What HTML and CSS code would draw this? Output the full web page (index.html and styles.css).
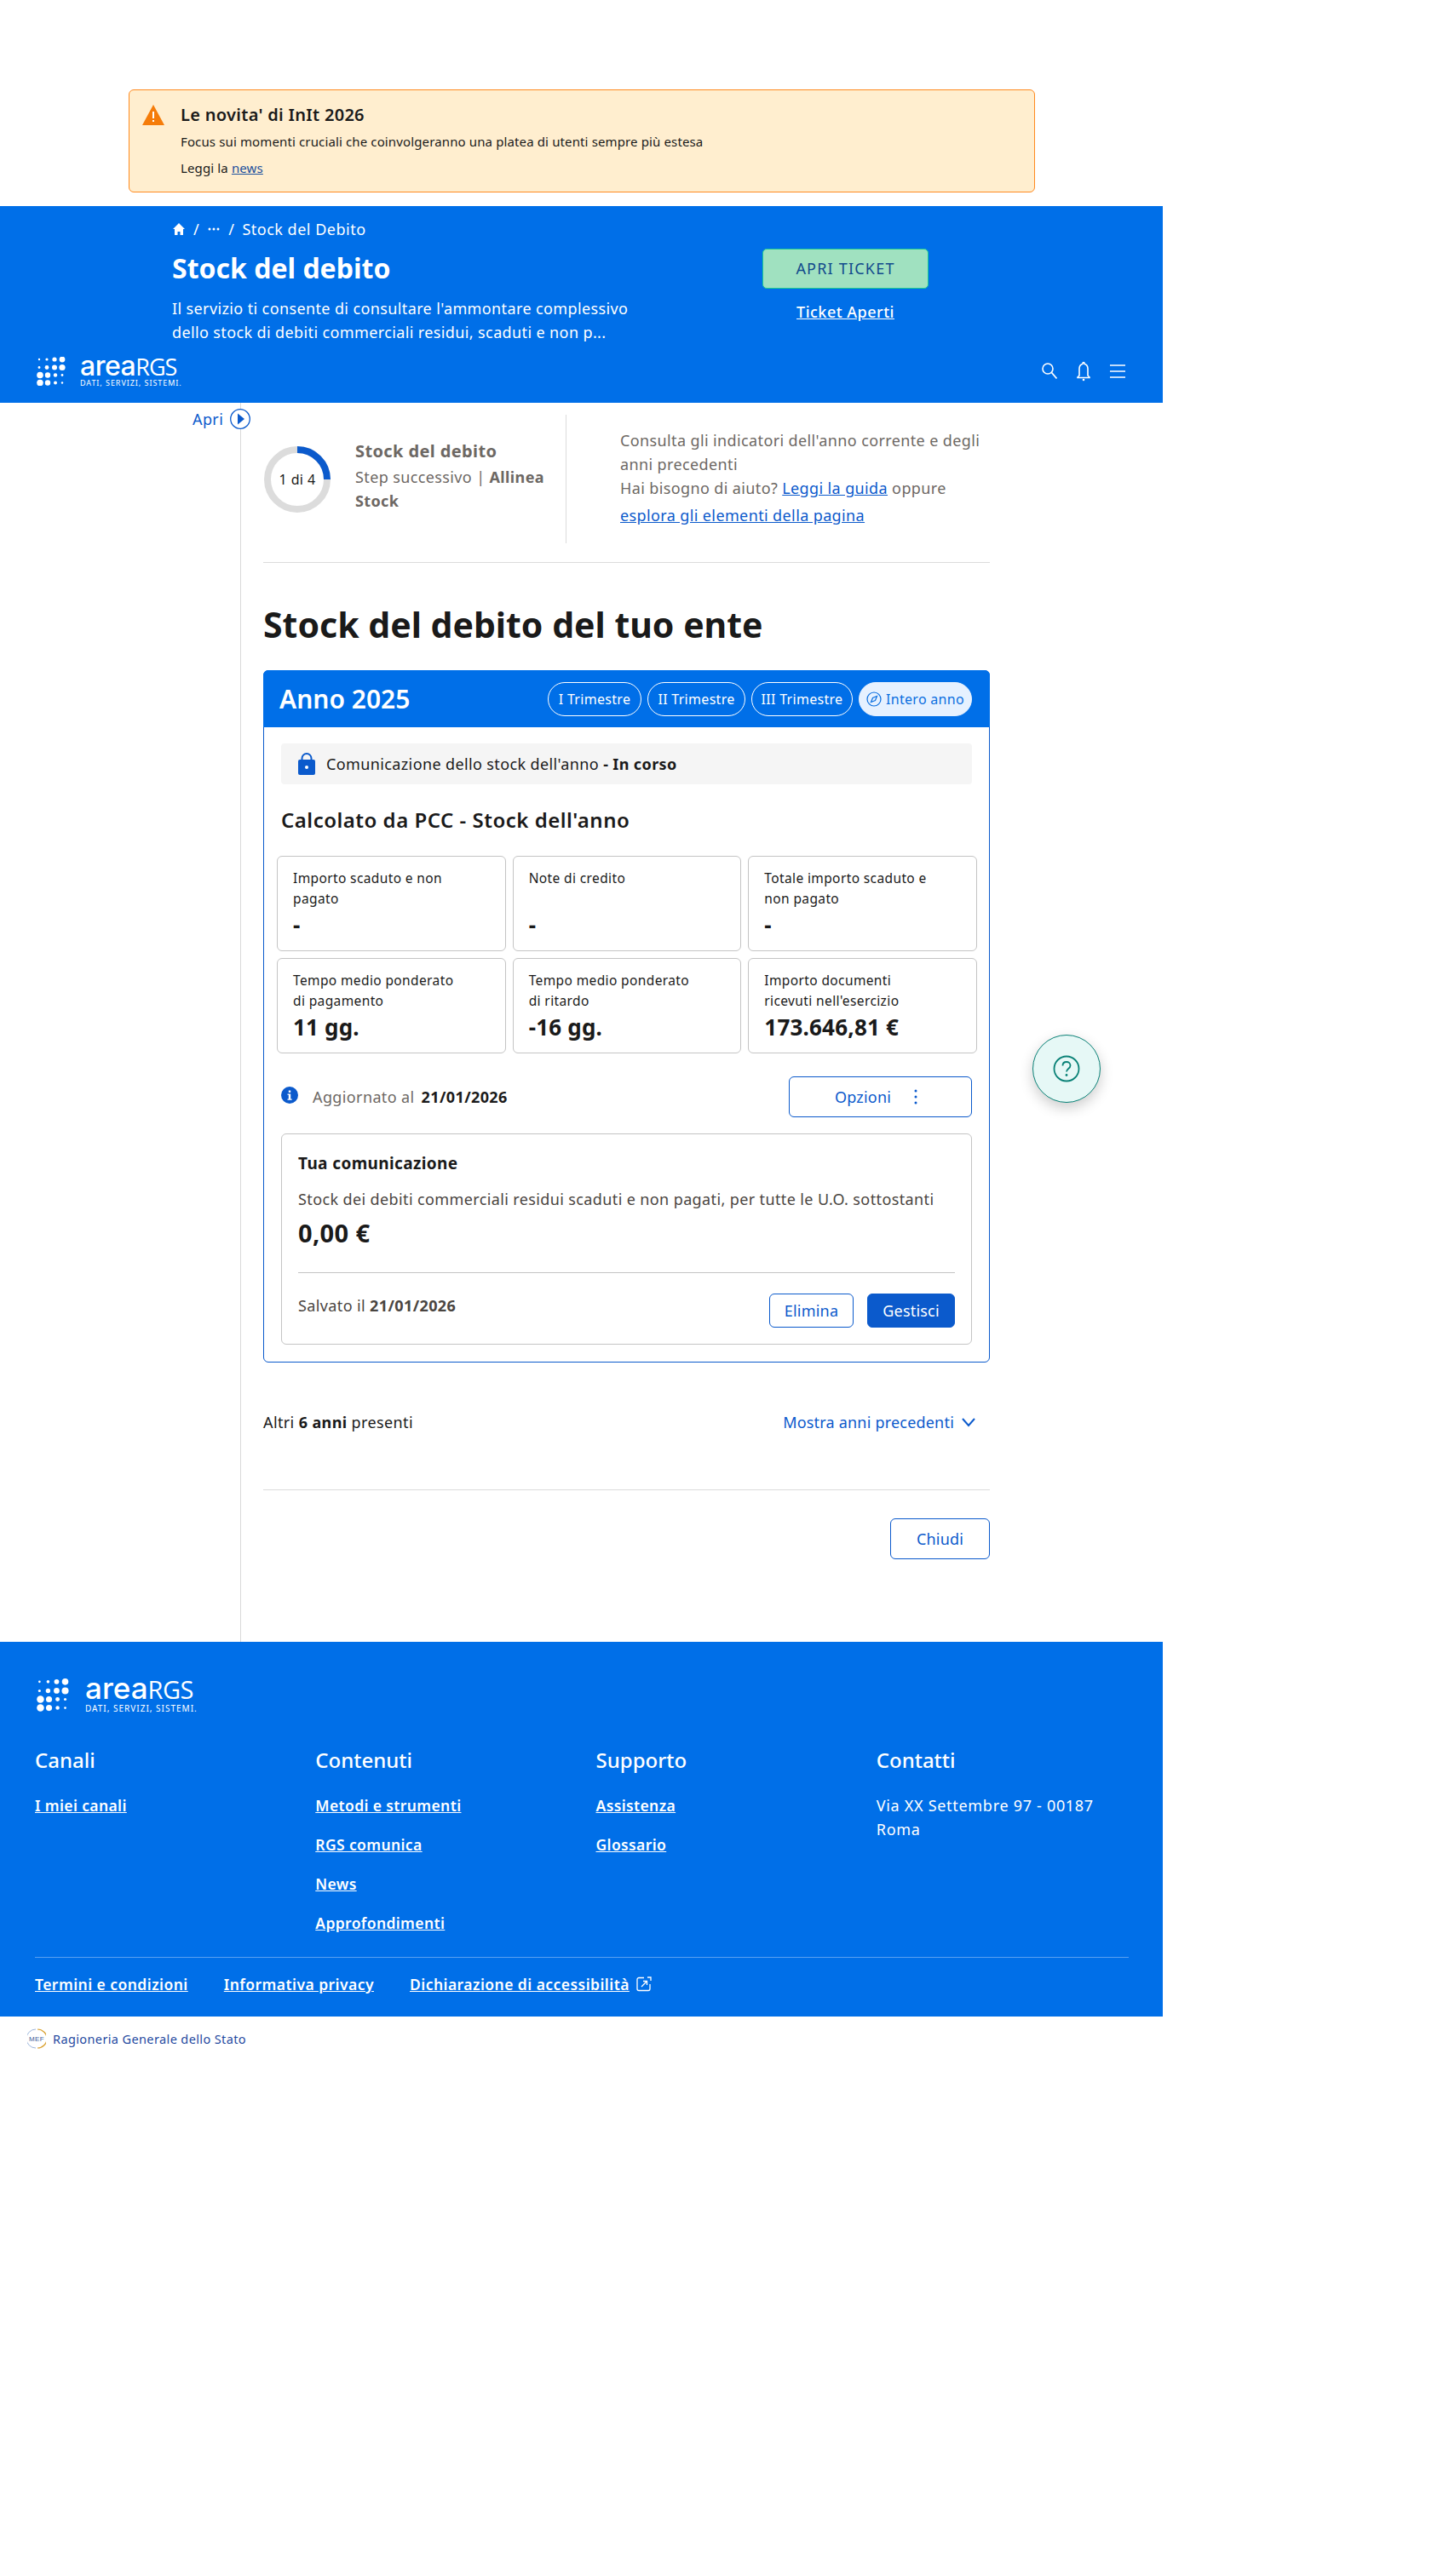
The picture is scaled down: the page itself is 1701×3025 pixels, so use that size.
FILE: index.html
```html
<!DOCTYPE html>
<html lang="it">
<head>
    <meta charset="UTF-8">
    <meta name="viewport" content="width=device-width, initial-scale=1.0">
    <title>Stock del debito</title>
    <link rel="stylesheet" href="styles.css">
</head>
<body>
    <svg class="defs" width="0" height="0">
        <symbol id="dots" viewBox="0 0 34 34">
            <circle cx="3" cy="3" r="1.2"/><circle cx="12" cy="3" r="1.6"/><circle cx="21" cy="3" r="2.6"/><circle cx="30" cy="3" r="3.4"/>
            <circle cx="3" cy="12.5" r="1.4"/><circle cx="12" cy="12.5" r="2.4"/><circle cx="21" cy="12.5" r="3"/><circle cx="30" cy="12.5" r="3.6"/>
            <circle cx="4" cy="21.5" r="3.8"/><circle cx="13" cy="21.5" r="3.2"/><circle cx="22" cy="21.5" r="2.2"/><circle cx="30" cy="21.5" r="1.4"/>
            <circle cx="4" cy="30.5" r="3.8"/><circle cx="13" cy="30.5" r="3.2"/><circle cx="22" cy="30.5" r="2"/><circle cx="30" cy="30.5" r="1.2"/>
        </symbol>
    </svg>

    <div class="page">
        <div class="alert">
            <svg class="alert-icon" viewBox="0 0 26 24"><path d="M13 0 26 24H0z" fill="#f57c0a"/><rect x="12" y="8" width="2" height="8" fill="#fff"/><rect x="12" y="18" width="2" height="2" fill="#fff"/></svg>
            <div class="alert-title">Le novita' di InIt 2026</div>
            <div class="alert-text">Focus sui momenti cruciali che coinvolgeranno una platea di utenti sempre più estesa</div>
            <div class="alert-text alert-last">Leggi la <a href="#">news</a></div>
        </div>

        <header class="hero">
            <div class="hero-top">
                <div class="hero-left">
                    <div class="crumbs">
                        <svg class="crumb-home" viewBox="0 0 16 16"><path d="M8 1 1 8h2v7h3.500v-4h3v4H13V8h2z" fill="#fff"/></svg>
                        <span>/</span>
                        <svg class="crumb-more" viewBox="0 0 16 4"><circle cx="3" cy="2" r="1.500" fill="#fff"/><circle cx="8" cy="2" r="1.500" fill="#fff"/><circle cx="13" cy="2" r="1.500" fill="#fff"/></svg>
                        <span>/</span>
                        <span>Stock del Debito</span>
                    </div>
                    <h1 class="hero-title">Stock del debito</h1>
                    <p class="hero-desc">Il servizio ti consente di consultare l'ammontare complessivo<br>dello stock di debiti commerciali residui, scaduti e non p...</p>
                </div>
                <div class="hero-actions">
                    <a class="btn-ticket" href="#">APRI TICKET</a>
                    <a class="ticket-link" href="#">Ticket Aperti</a>
                </div>
            </div>
            <div class="navbar">
                <div class="logo">
                    <svg class="logo-dots"><use href="#dots"/></svg>
                    <div>
                        <div class="logo-name">area<span>RGS</span></div>
                        <div class="logo-sub">DATI, SERVIZI, SISTEMI.</div>
                    </div>
                </div>
                <div class="nav-icons">
                    <svg viewBox="0 0 20 24"><circle cx="8" cy="9" r="6" fill="none" stroke="#fff" stroke-width="1.600"/><path d="m12.500 13.500 6 7" stroke="#fff" stroke-width="1.800" fill="none"/></svg>
                    <svg viewBox="0 0 20 24"><path d="M10 1.500c-.6 0-1 .4-1 1v.7C6.500 4 5 6.300 5 9v8l-2 2v.5h14V19l-2-2V9c0-2.700-1.500-5-4-5.800v-.7c0-.6-.4-1-1-1z" fill="none" stroke="#fff" stroke-width="1.600"/><circle cx="10" cy="22" r="1.300" fill="#fff"/></svg>
                    <svg viewBox="0 0 20 24"><path d="M1 5h18M1 12h18M1 19h18" stroke="#fff" stroke-width="1.600" fill="none"/></svg>
                </div>
            </div>
        </header>

        <main class="main">
            <a class="side-toggle" href="#">Apri <svg viewBox="0 0 24 24"><circle cx="12" cy="12" r="11.300" fill="#fff" stroke="#0b5acc" stroke-width="1.300"/><path d="M9 5.500v13l8-6.500z" fill="#0b5acc"/></svg></a>

            <section class="intro">
                <div class="intro-step">
                    <div class="donut">
                        <svg viewBox="0 0 78 78"><circle cx="39" cy="39" r="35" fill="none" stroke="#dcdcdc" stroke-width="8"/><path d="M39 4a35 35 0 0 1 35 35" fill="none" stroke="#0b5acc" stroke-width="8"/></svg>
                        <span>1 di 4</span>
                    </div>
                    <div class="step-text">
                        <div class="step-title">Stock del debito</div>
                        <div>Step successivo | <b>Allinea<br>Stock</b></div>
                    </div>
                </div>
                <div class="intro-help">
                    Consulta gli indicatori dell'anno corrente e degli<br>anni precedenti<br>
                    Hai bisogno di aiuto? <a href="#">Leggi la guida</a> oppure
                    <div class="help-last"><a href="#">esplora gli elementi della pagina</a></div>
                </div>
            </section>

            <h2 class="page-title">Stock del debito del tuo ente</h2>

            <section class="card">
                <div class="card-head">
                    <div class="card-year">Anno 2025</div>
                    <div class="pills">
                        <a class="pill pill-1" href="#">I Trimestre</a>
                        <a class="pill pill-2" href="#">II Trimestre</a>
                        <a class="pill pill-3" href="#">III Trimestre</a>
                        <a class="pill pill-active" href="#"><svg viewBox="0 0 18 18"><circle cx="9" cy="9" r="8" fill="none" stroke="#0b6fe0" stroke-width="1.200"/><path d="m12.500 5.500-2 5-5 2 2-5z" fill="none" stroke="#0b6fe0" stroke-width="1.200"/></svg>Intero anno</a>
                    </div>
                </div>
                <div class="card-body">
                    <div class="status">
                        <svg viewBox="0 0 20 26"><path d="M4.500 9V6.500a5.500 5.500 0 0 1 11 0V8" fill="none" stroke="#0b5acc" stroke-width="2"/><rect x="0" y="8" width="20" height="18" rx="2" fill="#0b5acc"/><circle cx="10" cy="17" r="2" fill="#fff"/></svg>
                        <span>Comunicazione dello stock dell'anno <b>- In corso</b></span>
                    </div>
                    <h3 class="calc-title">Calcolato da PCC - Stock dell'anno</h3>
                    <div class="tiles">
                        <div class="tile"><div class="tile-label">Importo scaduto e non<br>pagato</div><div class="tile-value">-</div></div>
                        <div class="tile"><div class="tile-label">Note di credito<br>&nbsp;</div><div class="tile-value">-</div></div>
                        <div class="tile"><div class="tile-label">Totale importo scaduto e<br>non pagato</div><div class="tile-value">-</div></div>
                        <div class="tile"><div class="tile-label">Tempo medio ponderato<br>di pagamento</div><div class="tile-value">11 gg.</div></div>
                        <div class="tile"><div class="tile-label">Tempo medio ponderato<br>di ritardo</div><div class="tile-value">-16 gg.</div></div>
                        <div class="tile"><div class="tile-label">Importo documenti<br>ricevuti nell'esercizio</div><div class="tile-value">173.646,81 €</div></div>
                    </div>
                    <div class="update">
                        <div class="update-left">
                            <svg viewBox="0 0 20 20"><circle cx="10" cy="10" r="10" fill="#0b5acc"/><rect x="8.800" y="4.500" width="2.400" height="2.400" fill="#fff"/><path d="M7.500 8.500h3.700v6h1.500v1.200H7.500v-1.200h1.300V9.700H7.500z" fill="#fff"/></svg>
                            <span>Aggiornato al</span> <b>21/01/2026</b>
                        </div>
                        <a class="btn btn-options" href="#">Opzioni <svg viewBox="0 0 4 18"><circle cx="2" cy="2" r="1.500"/><circle cx="2" cy="9" r="1.500"/><circle cx="2" cy="16" r="1.500"/></svg></a>
                    </div>
                    <div class="inner">
                        <div class="inner-title">Tua comunicazione</div>
                        <div class="inner-desc">Stock dei debiti commerciali residui scaduti e non pagati, per tutte le U.O. sottostanti</div>
                        <div class="inner-value">0,00 €</div>
                        <div class="inner-foot">
                            <div class="saved">Salvato il <b>21/01/2026</b></div>
                            <div class="inner-btns">
                                <a class="btn btn-small" href="#">Elimina</a>
                                <a class="btn btn-small btn-solid" href="#">Gestisci</a>
                            </div>
                        </div>
                    </div>
                </div>
            </section>

            <div class="more">
                <div>Altri <b>6 anni</b> presenti</div>
                <a class="more-link" href="#">Mostra anni precedenti <svg viewBox="0 0 18 12"><path d="m2 2 7 8 7-8" fill="none" stroke="#0b5acc" stroke-width="2"/></svg></a>
            </div>
            <div class="close-row">
                <a class="btn btn-close" href="#">Chiudi</a>
            </div>
        </main>

        <footer class="footer">
            <div class="logo logo-big">
                <svg class="logo-dots"><use href="#dots"/></svg>
                <div>
                    <div class="logo-name">area<span>RGS</span></div>
                    <div class="logo-sub">DATI, SERVIZI, SISTEMI.</div>
                </div>
            </div>
            <div class="foot-cols">
                <div class="foot-col">
                    <h4>Canali</h4>
                    <a href="#">I miei canali</a>
                </div>
                <div class="foot-col">
                    <h4>Contenuti</h4>
                    <a href="#">Metodi e strumenti</a>
                    <a href="#">RGS comunica</a>
                    <a href="#">News</a>
                    <a href="#">Approfondimenti</a>
                </div>
                <div class="foot-col">
                    <h4>Supporto</h4>
                    <a href="#">Assistenza</a>
                    <a href="#">Glossario</a>
                </div>
                <div class="foot-col">
                    <h4>Contatti</h4>
                    <p>Via XX Settembre 97 - 00187<br>Roma</p>
                </div>
            </div>
            <div class="foot-bottom">
                <a href="#">Termini e condizioni</a>
                <a href="#">Informativa privacy</a>
                <a href="#">Dichiarazione di accessibilità</a>
                <svg viewBox="0 0 18 18"><path d="M9 1.500H3a2 2 0 0 0-2 2v11a2 2 0 0 0 2 2h11a2 2 0 0 0 2-2V9" fill="none" stroke="#fff" stroke-width="1.300"/><path d="M6 12l6-6M8 5.500h4.500V10M13 1h4v4" fill="none" stroke="#fff" stroke-width="1.300"/></svg>
            </div>
        </footer>

        <div class="mef">
            <svg viewBox="0 0 22 24"><path d="M12 1a11 11 0 0 1 0 22" fill="none" stroke="#d9a02e" stroke-width="1.200"/><path d="M10 1a11 11 0 0 0 0 22" fill="none" stroke="#9db6dc" stroke-width="1"/><text x="11" y="15" text-anchor="middle">MEF</text></svg>
            <span>Ragioneria Generale dello Stato</span>
        </div>

        <a class="fab" href="#"><svg viewBox="0 0 32 32"><circle cx="16" cy="16" r="14.500" fill="none" stroke="#0a8277" stroke-width="1.800"/><path d="M11.500 12.500c0-2.800 2-4.500 4.500-4.500s4.500 1.700 4.500 4.200c0 3.800-4.500 3.800-4.500 7.300" fill="none" stroke="#0a8277" stroke-width="1.800"/><circle cx="16" cy="23.500" r="1.400" fill="#0a8277"/></svg></a>
    </div>
</body>
</html>
```

FILE: styles.css
```css
body {
    margin: 0;
    background-color: #ffffff;
    color: #1a1a1a;
    font-family: "Noto Sans", "Open Sans", sans-serif;
    font-size: 18px;
    line-height: 28px;
    letter-spacing: 0.38px;
}
a {
    color: #0b5acc;
}
b {
    font-weight: 700;
}
.defs {
    position: absolute;
}
.page {
    position: relative;
    width: 1365px;
    padding-top: 105px;
    padding-bottom: 620px;
}

/* avviso */
.alert {
    position: relative;
    box-sizing: border-box;
    width: 1064px;
    height: 121px;
    margin: 0 0 16px 151px;
    padding: 13px 0 0 60px;
    background-color: #ffeecf;
    border: 1px solid #ff8a1f;
    border-radius: 6px;
}
.alert-icon {
    position: absolute;
    left: 15px;
    top: 17px;
    width: 26px;
    height: 24px;
}
.alert-title {
    font-size: 20px;
    font-weight: 600;
    line-height: 32px;
    letter-spacing: 0.3px;
}
.alert-text {
    margin-top: 3px;
    font-size: 15px;
    line-height: 24px;
    letter-spacing: 0.13px;
}
.alert-last {
    margin-top: 7px;
}
.alert-last a {
    color: #1b4f9c;
}

/* testata */
.hero {
    height: 231px;
    background-color: #006fe8;
    color: #ffffff;
}
.hero-top {
    display: flex;
    height: 162px;
    padding-left: 202px;
}
.hero-left {
    width: 693px;
    padding-top: 15px;
}
.crumbs {
    display: flex;
    align-items: center;
    gap: 9px;
    height: 24px;
    letter-spacing: 0.5px;
}
.crumb-home {
    width: 16px;
    height: 16px;
}
.crumb-more {
    width: 16px;
    height: 4px;
}
.hero-title {
    margin: 12px 0 11px;
    font-size: 32px;
    font-weight: 700;
    line-height: 44px;
    letter-spacing: 0;
}
.hero-desc {
    margin: 0;
}
.hero-actions {
    display: flex;
    flex-direction: column;
    align-items: center;
    width: 195px;
    padding-top: 50px;
}
.btn-ticket {
    box-sizing: border-box;
    display: block;
    width: 195px;
    height: 47px;
    background-color: #a0e1c0;
    border: 1px solid #1ccb93;
    border-radius: 5px;
    color: #124a8c;
    line-height: 45px;
    text-align: center;
    text-decoration: none;
    letter-spacing: 1.2px;
}
.ticket-link {
    margin-top: 13px;
    color: #ffffff;
    font-weight: 500;
    letter-spacing: 0.5px;
}
.navbar {
    display: flex;
    justify-content: space-between;
    align-items: center;
    height: 64px;
    padding: 0 43px 5px;
}
.logo {
    display: flex;
    align-items: center;
    gap: 17px;
    color: #ffffff;
}
.logo-dots {
    width: 34px;
    height: 34px;
    fill: #ffffff;
}
.logo-name {
    height: 24px;
    font-family: Inter, "Noto Sans", sans-serif;
    font-size: 32px;
    font-weight: 500;
    line-height: 24px;
    letter-spacing: -0.5px;
}
.logo-name span {
    font-family: "Open Sans", sans-serif;
    font-size: 27px;
    letter-spacing: -1px;
}
.logo-sub {
    margin-top: 3px;
    font-size: 9px;
    line-height: 10px;
    letter-spacing: 0.95px;
}
.nav-icons {
    display: flex;
    gap: 20px;
}
.nav-icons svg {
    width: 20px;
    height: 24px;
}

/* contenuto */
.main {
    position: relative;
    box-sizing: border-box;
    width: 880px;
    height: 1455px;
    margin-left: 282px;
    padding: 14px 0 0 26px;
    border-left: 1px solid #d9d9d9;
}
.side-toggle {
    position: absolute;
    left: -57px;
    top: 5px;
    display: flex;
    align-items: center;
    gap: 8px;
    text-decoration: none;
}
.side-toggle svg {
    width: 24px;
    height: 24px;
}
.intro {
    display: flex;
    height: 174px;
    border-bottom: 1px solid #dcdcdc;
    color: #6d6864;
    box-sizing: border-box;
    padding-bottom: 22px;
}
.intro-step {
    display: flex;
    align-items: center;
    gap: 29px;
    box-sizing: border-box;
    width: 356px;
    border-right: 1px solid #dcdcdc;
}
.donut {
    position: relative;
    flex: none;
    width: 78px;
    height: 78px;
    margin-left: 1px;
}
.donut svg {
    display: block;
}
.donut span {
    position: absolute;
    inset: 0;
    color: #1a1a1a;
    font-size: 16px;
    line-height: 78px;
    text-align: center;
}
.step-text {
    width: 232px;
    margin-top: -8px;
}
.step-title {
    margin-bottom: 2px;
    font-size: 20px;
    font-weight: 700;
}
.intro-help {
    padding: 16px 0 0 63px;
}
.help-last {
    margin-top: 4px;
}
.page-title {
    margin: 44px 0 26px;
    font-size: 41px;
    font-weight: 700;
    line-height: 56px;
    letter-spacing: 0;
}

/* scheda anno */
.card {
    box-sizing: border-box;
    width: 853px;
    height: 813px;
    border: 1px solid #0b5acc;
    border-radius: 6px;
}
.card-head {
    display: flex;
    justify-content: space-between;
    align-items: center;
    height: 67px;
    margin: -1px -1px 0;
    padding: 0 21px 0 19px;
    background-color: #006fe8;
    border-radius: 6px 6px 0 0;
    color: #ffffff;
}
.card-year {
    font-size: 30px;
    font-weight: 600;
    letter-spacing: 0;
}
.pills {
    display: flex;
    gap: 7px;
}
.pill {
    box-sizing: border-box;
    display: flex;
    justify-content: center;
    align-items: center;
    gap: 5px;
    height: 40px;
    border: 1px solid #ffffff;
    border-radius: 20px;
    color: #ffffff;
    font-size: 16px;
    letter-spacing: 0.3px;
    text-decoration: none;
}
.pill-1 {
    width: 110px;
}
.pill-2 {
    width: 115px;
}
.pill-3 {
    width: 119px;
}
.pill-active {
    width: 133px;
    background-color: #e6f1ff;
    color: #0b6fe0;
    border-color: #e6f1ff;
}
.pill svg {
    width: 18px;
    height: 18px;
}
.card-body {
    padding: 19px 20px 0;
}
.status {
    display: flex;
    align-items: center;
    gap: 13px;
    height: 48px;
    padding-left: 20px;
    background-color: #f5f5f5;
    border-radius: 4px;
}
.status svg {
    width: 20px;
    height: 26px;
}
.calc-title {
    margin: 26px 0;
    font-size: 24px;
    font-weight: 600;
    line-height: 32px;
    letter-spacing: 0.5px;
}
.tiles {
    display: grid;
    grid-template-columns: repeat(3, 1fr);
    grid-auto-rows: 112px;
    gap: 8px;
    width: 822px;
    margin-left: -5px;
}
.tile {
    box-sizing: border-box;
    padding: 13px 18px 0;
    border: 1px solid #c4c4c4;
    border-radius: 6px;
}
.tile-label {
    font-size: 15.5px;
    line-height: 24px;
}
.tile-value {
    margin-top: 3px;
    font-size: 26px;
    font-weight: 700;
    line-height: 32px;
    letter-spacing: 0.2px;
}
.update {
    display: flex;
    justify-content: space-between;
    align-items: center;
    margin-top: 27px;
}
.update-left {
    display: flex;
    align-items: center;
    gap: 8px;
}
.update-left svg {
    width: 20px;
    height: 20px;
    margin-right: 9px;
    margin-top: -4px;
}
.update-left span {
    color: #6d6864;
}
.btn {
    box-sizing: border-box;
    display: flex;
    justify-content: center;
    align-items: center;
    border: 1px solid #0b5acc;
    border-radius: 6px;
    color: #0b5acc;
    text-decoration: none;
    letter-spacing: 0.2px;
}
.btn-options {
    gap: 27px;
    width: 215px;
    height: 48px;
    padding-right: 10px;
}
.btn-options svg {
    width: 4px;
    height: 18px;
    fill: #0b5acc;
}
.inner {
    box-sizing: border-box;
    height: 248px;
    margin-top: 19px;
    padding: 20px 19px 0;
    border: 1px solid #c4c4c4;
    border-radius: 6px;
}
.inner-title {
    font-size: 19px;
    font-weight: 700;
}
.inner-desc {
    margin-top: 14px;
    color: #4a4541;
    white-space: nowrap;
}
.inner-value {
    margin-top: 6px;
    font-size: 29px;
    font-weight: 700;
    line-height: 40px;
}
.inner-foot {
    display: flex;
    justify-content: space-between;
    margin-top: 26px;
    padding-top: 24px;
    border-top: 1px solid #c4c4c4;
}
.saved {
    color: #4a4541;
}
.inner-btns {
    display: flex;
    gap: 16px;
}
.btn-small {
    width: 99px;
    height: 40px;
}
.btn-solid {
    width: 103px;
    background-color: #0b5acc;
    color: #ffffff;
}
.more {
    display: flex;
    justify-content: space-between;
    margin-top: 56px;
    padding-bottom: 65px;
    border-bottom: 1px solid #dcdcdc;
    width: 853px;
}
.more-link {
    display: flex;
    align-items: center;
    gap: 8px;
    margin-right: 16px;
    text-decoration: none;
    letter-spacing: 0.2px;
}
.more-link svg {
    width: 18px;
    height: 12px;
}
.close-row {
    display: flex;
    justify-content: flex-end;
    width: 853px;
    margin-top: 33px;
}
.btn-close {
    width: 117px;
    height: 48px;
}

/* piede */
.footer {
    padding: 41px 40px 24px 41px;
    background-color: #006fe8;
    color: #ffffff;
}
.logo-big {
    margin-left: 2px;
    gap: 19px;
}
.logo-big .logo-dots {
    width: 38px;
    height: 39px;
}
.logo-big .logo-name {
    height: 26px;
    font-size: 35px;
    line-height: 26px;
    letter-spacing: 0;
}
.logo-big .logo-name span {
    font-size: 29px;
    letter-spacing: -0.5px;
}
.logo-big .logo-sub {
    margin-top: 6px;
    font-size: 10px;
    line-height: 11px;
    letter-spacing: 1px;
}
.foot-cols {
    display: grid;
    grid-template-columns: repeat(4, 1fr);
    gap: 33px;
    margin-top: 39px;
}
.foot-col {
    display: flex;
    flex-direction: column;
    align-items: flex-start;
    gap: 18px;
}
.foot-col h4 {
    margin: 0 0 5px;
    font-size: 24px;
    font-weight: 500;
    line-height: 32px;
    letter-spacing: 0;
}
.foot-col a,
.foot-bottom a {
    color: #ffffff;
    font-size: 17.5px;
    font-weight: 600;
}
.foot-bottom a {
    letter-spacing: 0.45px;
}
.foot-col p {
    margin: 0;
    letter-spacing: 0.7px;
}
.foot-bottom {
    display: flex;
    align-items: center;
    gap: 42px;
    margin-top: 26px;
    padding-top: 17px;
    border-top: 1px solid rgba(255, 255, 255, 0.35);
}
.foot-bottom svg {
    width: 18px;
    height: 18px;
    margin-left: -34px;
}

.mef {
    display: flex;
    align-items: center;
    gap: 8px;
    padding: 12px 32px 0;
    color: #1f4a9f;
    font-size: 14.5px;
}
.mef svg {
    width: 22px;
    height: 24px;
}
.mef text {
    fill: #3c5a9a;
    font-family: "Liberation Sans", sans-serif;
    font-size: 8px;
}
.fab {
    position: absolute;
    left: 1212px;
    top: 1215px;
    box-sizing: border-box;
    display: flex;
    justify-content: center;
    align-items: center;
    width: 80px;
    height: 80px;
    background-color: #e6f8f6;
    border: 1px solid #0a8277;
    border-radius: 50%;
    box-shadow: 0 6px 16px rgba(0, 0, 0, 0.2);
}
.fab svg {
    width: 32px;
    height: 32px;
}
```
